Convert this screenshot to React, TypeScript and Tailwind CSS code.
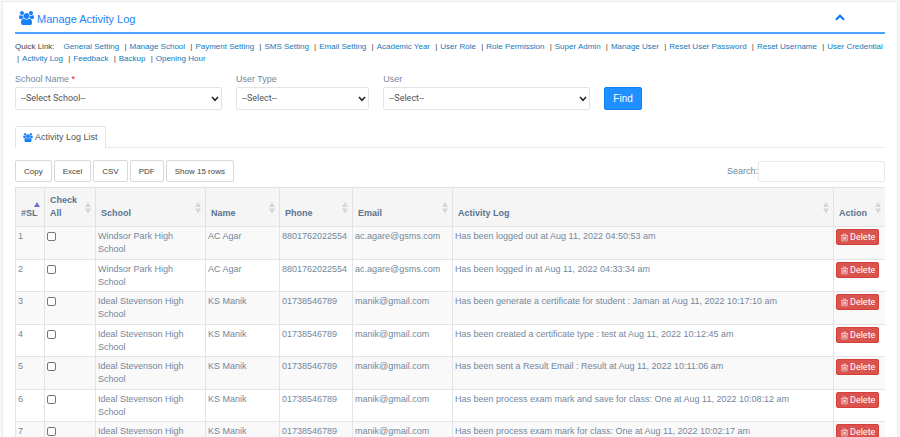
import React from "react";

const quickLinks = [
  "General Setting", "Manage School", "Payment Setting", "SMS Setting", "Email Setting",
  "Academic Year", "User Role", "Role Permission", "Super Admin", "Manage User",
  "Reset User Password", "Reset Username", "User Credential", "Activity Log",
  "Feedback", "Backup", "Opening Hour",
];

type Row = { school: string; name: string; phone: string; email: string; log: string };

const windsor = { school: "Windsor Park High School", name: "AC Agar", phone: "8801762022554", email: "ac.agare@gsms.com" };
const ideal = { school: "Ideal Stevenson High School", name: "KS Manik", phone: "01738546789", email: "manik@gmail.com" };

const rows: Row[] = [
  { ...windsor, log: "Has been logged out at Aug 11, 2022 04:50:53 am" },
  { ...windsor, log: "Has been logged in at Aug 11, 2022 04:33:34 am" },
  { ...ideal, log: "Has been generate a certificate for student : Jaman at Aug 11, 2022 10:17:10 am" },
  { ...ideal, log: "Has been created a certificate type : test at Aug 11, 2022 10:12:45 am" },
  { ...ideal, log: "Has been sent a Result Email : Result at Aug 11, 2022 10:11:06 am" },
  { ...ideal, log: "Has been process exam mark and save for class: One at Aug 11, 2022 10:08:12 am" },
  { ...ideal, log: "Has been process exam mark for class: One at Aug 11, 2022 10:02:17 am" },
];

function UsersIcon({ className }: { className: string }) {
  return (
    <svg viewBox="0 0 1920 1792" className={className} fill="currentColor" aria-hidden="true">
      <path d="M593 896q-162 5-265 128h-134q-82 0-138-40.5t-56-118.5q0-353 124-353 6 0 43.5 21t97.5 42.5 119 21.5q67 0 133-23-5 37-5 66 0 139 81 256zm1071 637q0 120-73 189.5t-194 69.5h-874q-121 0-194-69.5t-73-189.5q0-53 3.5-103.5t14-109 26.5-108.5 43-97.5 62-81 85.5-53.5 111.5-20q10 0 43 21.5t73 48 107 48 135 21.5 135-21.5 107-48 73-48 43-21.5q61 0 111.5 20t85.5 53.5 62 81 43 97.5 26.5 108.5 14 109 3.5 103.5zm-1024-1277q0 106-75 181t-181 75-181-75-75-181 75-181 181-75 181 75 75 181zm704 384q0 159-112.5 271.5t-271.5 112.5-271.5-112.5-112.5-271.5 112.5-271.5 271.5-112.5 271.5 112.5 112.5 271.5zm576 225q0 78-56 118.5t-138 40.5h-134q-103-123-265-128 81-117 81-256 0-29-5-66 66 23 133 23 59 0 119-21.5t97.5-42.5 43.5-21q124 0 124 353zm-128-609q0 106-75 181t-181 75-181-75-75-181 75-181 181-75 181 75 75 181z" />
    </svg>
  );
}

function TrashIcon() {
  return (
    <svg viewBox="0 0 1792 1792" className="size-[9px]" fill="currentColor" aria-hidden="true">
      <path d="M704 736v576q0 14-9 23t-23 9h-64q-14 0-23-9t-9-23v-576q0-14 9-23t23-9h64q14 0 23 9t9 23zm256 0v576q0 14-9 23t-23 9h-64q-14 0-23-9t-9-23v-576q0-14 9-23t23-9h64q14 0 23 9t9 23zm256 0v576q0 14-9 23t-23 9h-64q-14 0-23-9t-9-23v-576q0-14 9-23t23-9h64q14 0 23 9t9 23zm128 724v-948h-896v948q0 22 7 40.5t14.5 27 10.5 8.5h832q3 0 10.5-8.5t14.5-27 7-40.5zm-672-1076h448l-48-117q-7-9-17-11h-317q-10 2-17 11zm928 32v64q0 14-9 23t-23 9h-96v948q0 83-47 143.5t-113 60.5h-832q-66 0-113-58.5t-47-141.5v-952h-96q-14 0-23-9t-9-23v-64q0-14 9-23t23-9h309l70-167q15-37 54-63t79-26h320q40 0 79 26t54 63l70 167h309q14 0 23 9t9 23z" />
    </svg>
  );
}

function SortIcon({ sorted }: { sorted?: boolean }) {
  return sorted ? (
    <svg viewBox="0 0 6 12" className="absolute top-[12px] right-[4px] h-[12px] w-[6px]" aria-hidden="true">
      <path d="M3 2L6 7H0z" fill="#6b6fdc" />
    </svg>
  ) : (
    <svg viewBox="0 0 6 12" className="absolute top-[14px] right-[4px] h-[12px] w-[6px]" aria-hidden="true">
      <path d="M3 0L6 5H0zM0 6.500H6L3 11.500z" fill="#d6d6d6" />
    </svg>
  );
}

function SelectField({ id, label, option, required, className }: {
  id: string; label: string; option: string; required?: boolean; className: string;
}) {
  return (
    <div className={className}>
      <label htmlFor={id} className="block leading-[13px]">
        {label}
        {required && <span className="text-[#f00]"> *</span>}
      </label>
      <div className="relative mt-px">
        <select
          id={id}
          className="block h-[23px] w-full appearance-none rounded-[2px] border border-[#e2e4e6] bg-white px-[5px] font-[Roboto,sans-serif] text-[9px] text-[#555]"
        >
          <option>{option}</option>
        </select>
        <svg viewBox="0 0 8 6" className="pointer-events-none absolute top-[9px] right-[3px] h-[6px] w-[8px]" aria-hidden="true">
          <path d="M1 1L4 4.300L7 1" fill="none" stroke="#222" strokeWidth="1.500" />
        </svg>
      </div>
    </div>
  );
}

const headings = [
  { label: "#SL", width: "w-[29px]" },
  { label: "Check All", width: "w-[51px]" },
  { label: "School", width: "w-[110px]" },
  { label: "Name", width: "w-[74px]" },
  { label: "Phone", width: "w-[73px]" },
  { label: "Email", width: "w-[100px]" },
  { label: "Activity Log", width: "" },
  { label: "Action", width: "w-[52px]" },
];

const cell = "border-t border-l border-[#e4e4e4] pt-[3px] pr-[4px] pl-[2px] align-top";

export default function App() {
  return (
    <div className="h-screen overflow-hidden bg-[#f7f7f7] px-[2px] pt-px font-['Liberation_Sans',Arial,sans-serif] text-[9px] leading-[13px] text-[#73879c]">
      <main className="min-h-screen border border-[#e9ebed] bg-white px-[12px] pt-[6px]">
        <header className="flex h-[26px] items-start justify-between border-b-2 border-[#4aa5ff] pr-[40px] pl-[4px] text-[#1a82f7]">
          <h1 className="flex items-center gap-[3px] text-[11px] leading-[22px]">
            <UsersIcon className="mb-[2px] h-[14px] w-[15px]" />
            Manage Activity Log
          </h1>
          <button type="button" aria-label="Collapse panel" className="mt-[6px]">
            <svg viewBox="0 0 10 7" className="h-[7px] w-[10px]" aria-hidden="true">
              <path d="M1 5.700L5 1.700L9 5.700" fill="none" stroke="#0d7bf5" strokeWidth="2.200" />
            </svg>
          </button>
        </header>

        <nav className="mt-[7px] text-[8px] leading-[12px] text-[#444]">
          <span className="mr-[9px]">Quick Link:</span>
          {quickLinks.map((link, i) => (
            <React.Fragment key={link}>
              {i > 0 && " "}
              <span className="whitespace-nowrap">
                {i > 0 && <span className="mr-[3px] ml-[2px]">|</span>}
                <a href="#" className="mr-px text-[#1479b8]">{link}</a>
              </span>
            </React.Fragment>
          ))}
        </nav>

        <form className="mt-[8px] grid grid-cols-12 gap-x-[14px]" onSubmit={(e) => e.preventDefault()}>
          <SelectField id="school" label="School Name" option="--Select School--" required className="col-span-3" />
          <SelectField id="user-type" label="User Type" option="--Select--" className="col-span-2" />
          <SelectField id="user" label="User" option="--Select--" className="col-span-3" />
          <div className="col-span-2 flex items-end">
            <button type="submit" className="h-[23px] rounded-[2px] border border-[#0f80f2] bg-[#1e90ff] px-[8px] text-[10px] text-white">
              Find
            </button>
          </div>
        </form>

        <div role="tablist" className="mt-[16px] flex border-b border-[#e9e9e9]">
          <button
            type="button"
            role="tab"
            aria-selected="true"
            className="-mb-px flex h-[22px] items-center gap-[2px] rounded-t-[3px] border border-b-0 border-[#e2e2e2] bg-white px-[7px] text-[#555]"
          >
            <UsersIcon className="h-[9px] w-[10px] text-[#1a82f7]" />
            Activity Log List
          </button>
        </div>

        <div className="mt-[12px] flex items-center justify-between">
          <div className="flex gap-[2px] text-[8px] text-[#444]">
            {["Copy", "Excel", "CSV", "PDF", "Show 15 rows"].map((label) => (
              <button key={label} type="button" className="h-[22px] rounded-[2px] border border-[#d9d9d9] bg-white px-[8px]">
                {label}
              </button>
            ))}
          </div>
          <label className="flex items-center">
            Search:
            <input type="search" className="h-[21px] w-[127px] rounded-[2px] border border-[#e4e9ed] bg-white px-[4px]" />
          </label>
        </div>

        <table className="mt-[5px] w-full table-fixed border-separate border-spacing-0">
          <thead>
            <tr className="bg-[#f5f5f5] text-left text-[#5a738e]">
              {headings.map(({ label, width }, i) => (
                <th
                  key={label}
                  scope="col"
                  className={`relative h-[39px] border-t border-l border-[#e2e2e2] pr-[12px] pb-[6px] pl-[5px] align-bottom font-bold ${width}`}
                >
                  {label}
                  <SortIcon sorted={i === 0} />
                </th>
              ))}
            </tr>
          </thead>
          <tbody>
            {rows.map((row, i) => (
              <tr key={i} className="odd:bg-[#f9f9f9] odd:[&>td]:pb-[3px] even:[&>td]:pb-[2px]">
                <td className={cell}>{i + 1}</td>
                <td className={cell}>
                  <input
                    type="checkbox"
                    aria-label={`Select row ${i + 1}`}
                    className="mt-[2px] block size-[9px] appearance-none rounded-[2px] border border-[#767676] bg-white checked:bg-[#1e90ff]"
                  />
                </td>
                <td className={cell}>{row.school}</td>
                <td className={cell}>{row.name}</td>
                <td className={cell}>{row.phone}</td>
                <td className={cell}>{row.email}</td>
                <td className={cell}>{row.log}</td>
                <td className={cell}>
                  <button
                    type="button"
                    className="-mt-px flex h-[16px] items-center gap-px rounded-[2px] border border-[#d43f3a] bg-[#d9534f] px-[3px] font-[Roboto,sans-serif] text-white"
                  >
                    <TrashIcon />
                    Delete
                  </button>
                </td>
              </tr>
            ))}
          </tbody>
        </table>
      </main>
    </div>
  );
}
